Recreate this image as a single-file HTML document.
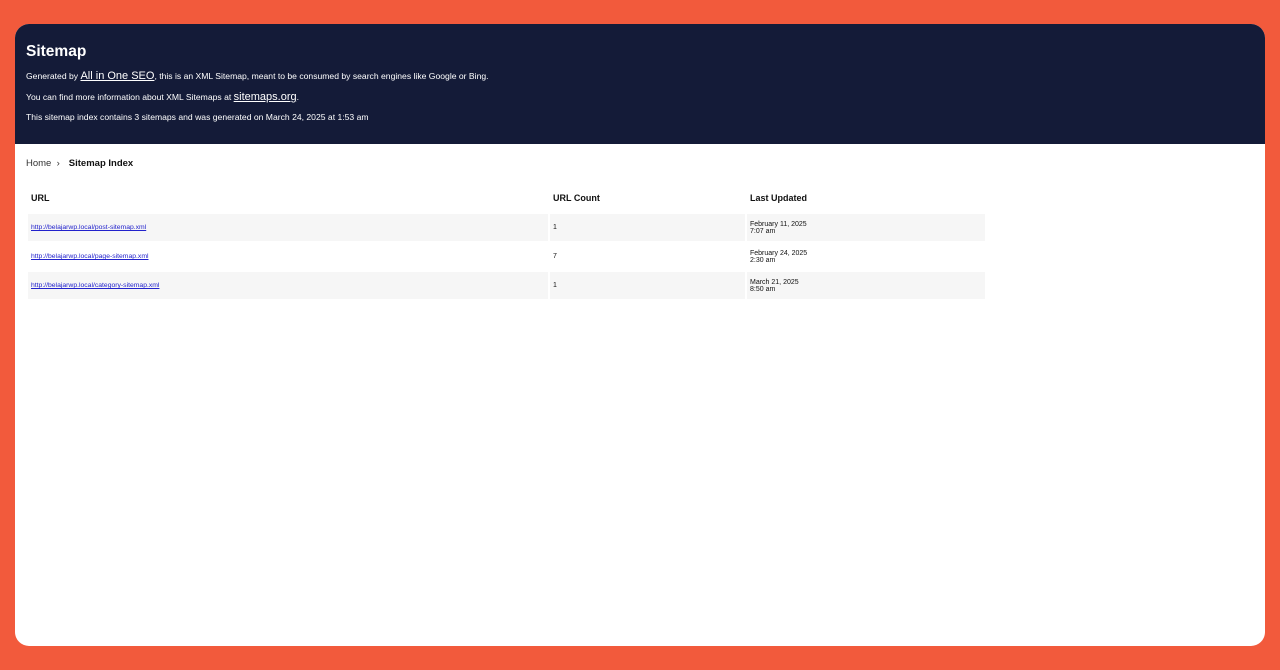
<!DOCTYPE html>
<html><head><meta charset="utf-8"><style>
body{margin:0;background:#f25a3c;font-family:"Liberation Sans",Arial,sans-serif;width:1280px;height:670px;overflow:hidden;position:relative}
.card{position:absolute;left:15px;top:24px;width:1250px;height:622px;background:#fff;border-radius:14px;overflow:hidden}
.hd{background:#141b38;color:#fff;height:120px;position:relative}
.hd h1{position:absolute;left:11px;top:19px;margin:0;font-size:15.5px;font-weight:bold;line-height:18px}
.hd p{position:absolute;left:11px;margin:0;font-size:8.6px;line-height:12px;white-space:nowrap}
.hd a{color:#fff;font-size:11px}
.bc{position:absolute;left:11px;top:133px;font-size:9.5px;color:#333}
.bc b{color:#111;margin-left:9px}
table{position:absolute;left:11px;top:158px;border-collapse:separate;border-spacing:2px 2px;font-size:7px}
th{text-align:left;font-size:9px;height:28px;padding:0 3px;color:#111}
td{height:27px;padding:0 3px;background:#f6f6f6;color:#111}
tr.w td{background:#fff}
td a{color:#22c;font-size:6.8px}
</style></head><body>
<div class="card">
<div class="hd">
<h1>Sitemap</h1>
<p style="top:46px">Generated by <a href="#">All in One SEO</a>, this is an XML Sitemap, meant to be consumed by search engines like Google or Bing.</p>
<p style="top:67px">You can find more information about XML Sitemaps at <a href="#">sitemaps.org</a>.</p>
<p style="top:87px">This sitemap index contains 3 sitemaps and was generated on March 24, 2025 at 1:53 am</p>
</div>
<div class="bc" style="top:134px">Home &nbsp;›<b>Sitemap Index</b></div>
<table>
<tr class="w"><th style="width:514px">URL</th><th style="width:189px">URL Count</th><th style="width:232px">Last Updated</th></tr>
<tr><td><a href="#">http://belajarwp.local/post-sitemap.xml</a></td><td>1</td><td>February 11, 2025<br>7:07 am</td></tr>
<tr class="w"><td><a href="#">http://belajarwp.local/page-sitemap.xml</a></td><td>7</td><td>February 24, 2025<br>2:30 am</td></tr>
<tr><td><a href="#">http://belajarwp.local/category-sitemap.xml</a></td><td>1</td><td>March 21, 2025<br>8:50 am</td></tr>
</table>
</div>
</body></html>
